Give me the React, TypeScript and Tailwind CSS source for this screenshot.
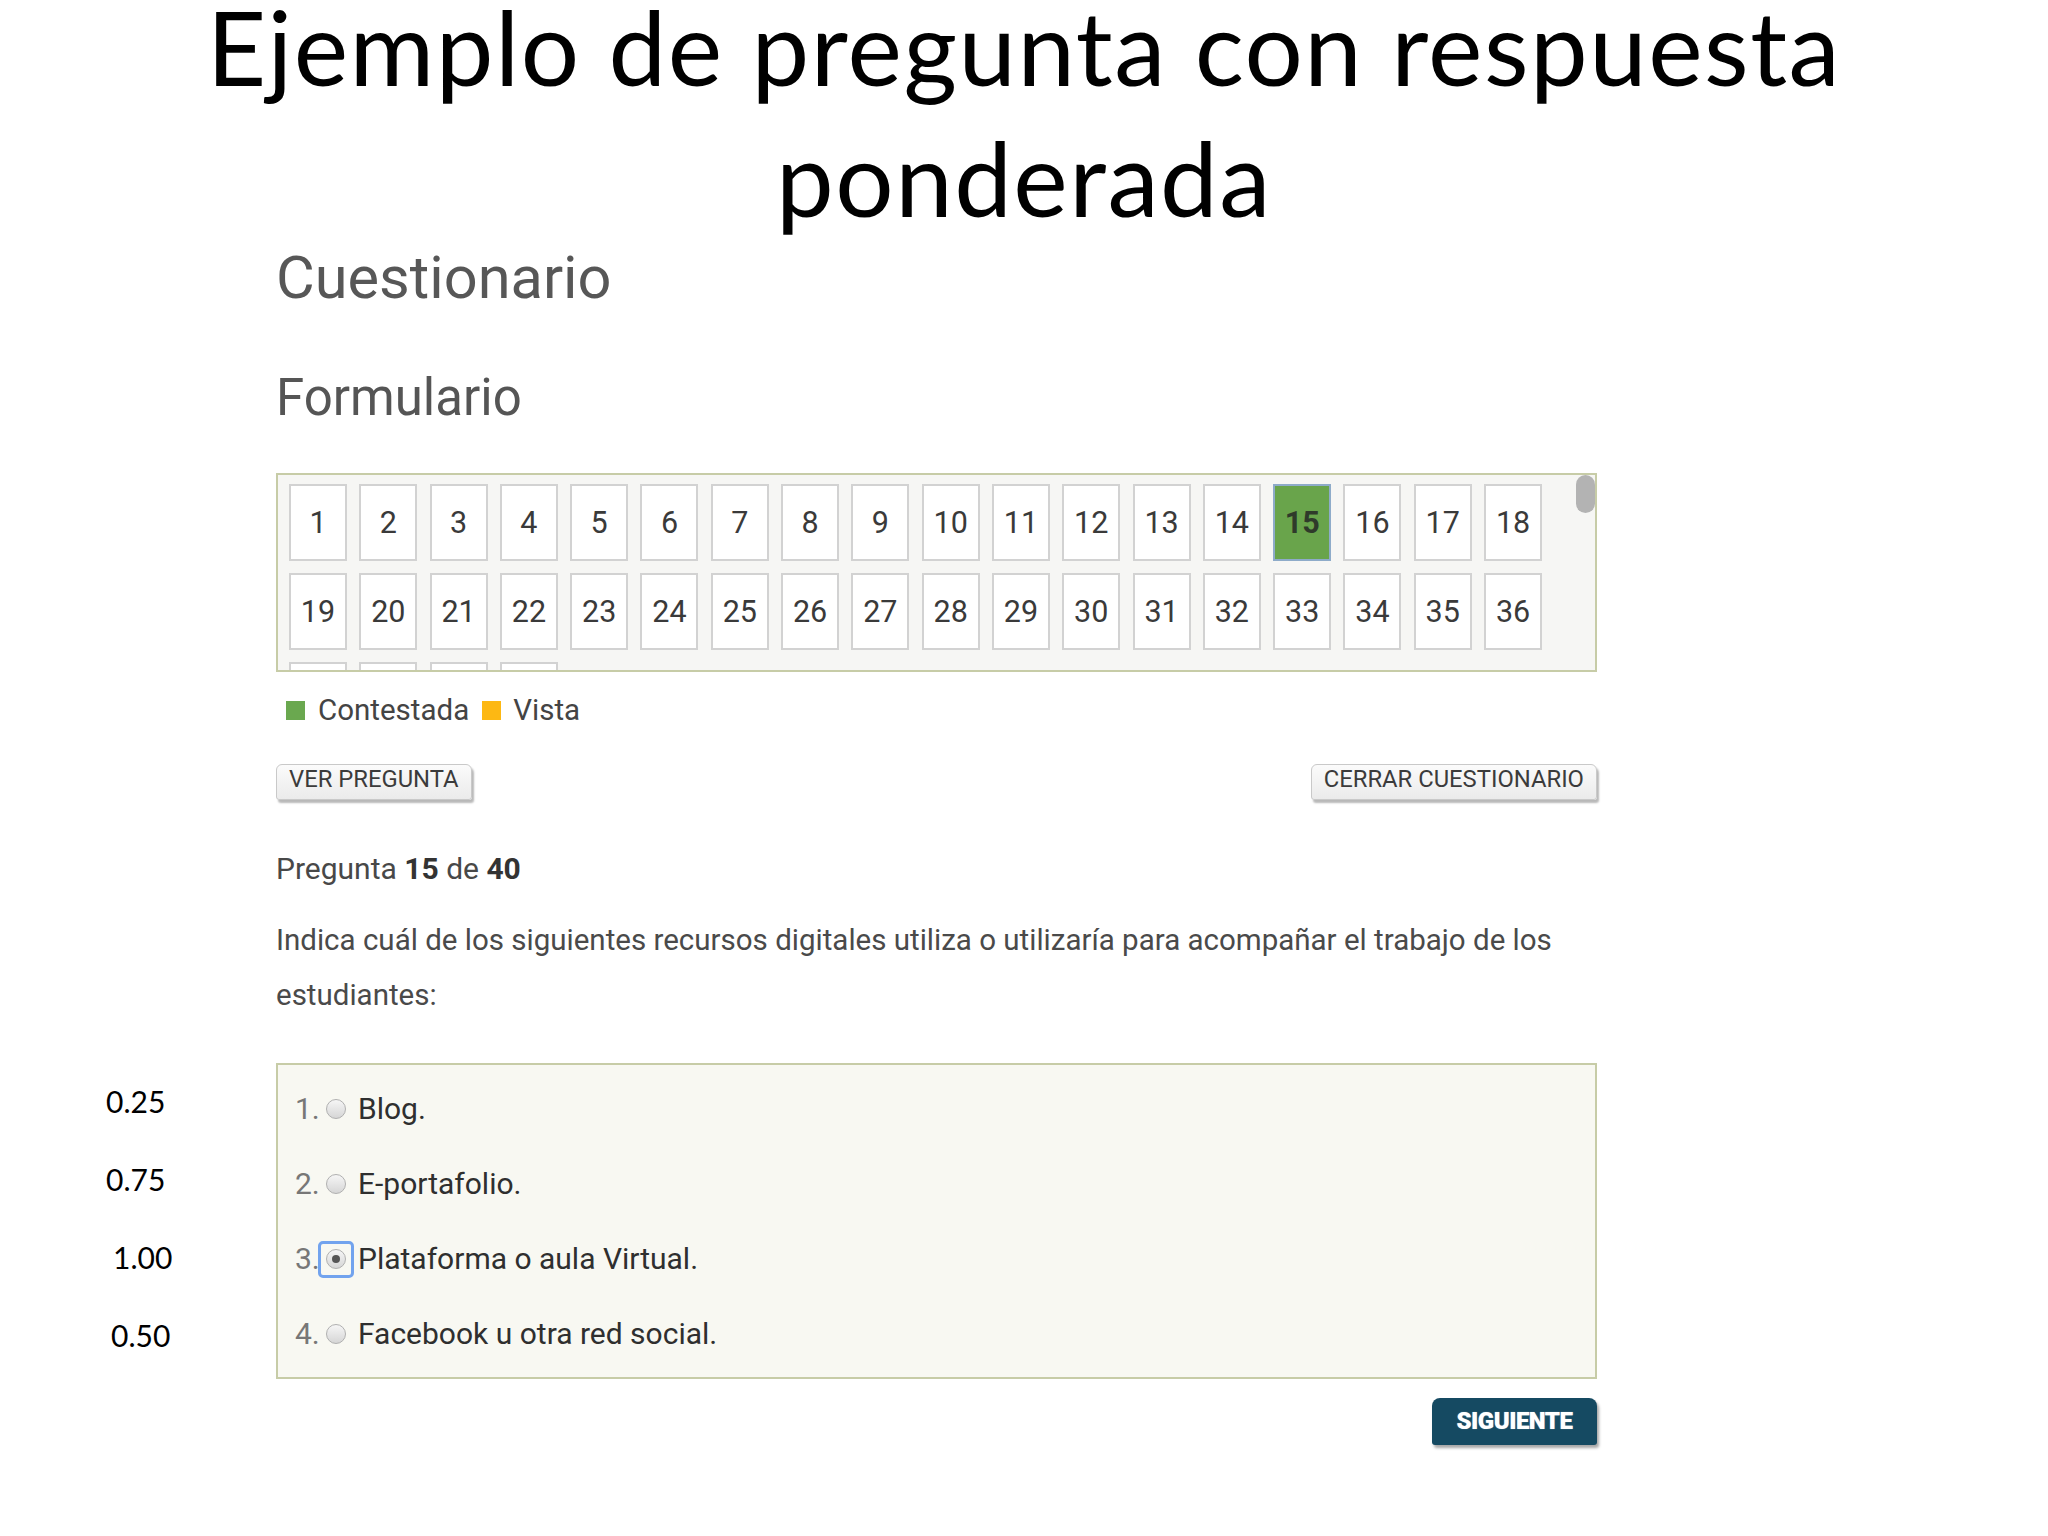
import React from "react";

const WEB_FONT = "font-['Roboto','Liberation_Sans',sans-serif]";
const SLIDE_FONT = "font-['Lato','Liberation_Sans',sans-serif]";

// third row sits under the scroll edge, only the cell tops show
const rows = [
  Array.from({ length: 18 }, (_, i) => i + 1),
  Array.from({ length: 18 }, (_, i) => i + 19),
  Array.from({ length: 4 }, (_, i) => i + 37),
];

const options = [
  { n: "1.", label: "Blog.", score: "0.25", scoreClass: "ml-[106px]", selected: false },
  { n: "2.", label: "E-portafolio.", score: "0.75", scoreClass: "ml-[106px]", selected: false },
  { n: "3.", label: "Plataforma o aula Virtual.", score: "1.00", scoreClass: "ml-[113px]", selected: true },
  { n: "4.", label: "Facebook u otra red social.", score: "0.50", scoreClass: "ml-[111px]", selected: false },
];

const greyButtonClass =
  "flex h-[36px] items-center rounded-t-[6px] rounded-b-[3px] border border-[#c9c9c9] bg-gradient-to-b from-[#fbfbfb] to-[#ebebeb] px-[12px] pb-[4px] text-[23.8px] text-[#3b3b3b] shadow-[2px_3px_2px_rgba(0,0,0,0.28)]";

function NavCell({ n, hidden }: { n: number; hidden?: boolean }) {
  const current = n === 15;
  return (
    <div
      className={
        current
          ? "flex h-[77px] w-[58px] items-center justify-center border-2 border-[#8eabc9] bg-[#69a44b] text-[30.5px] font-bold text-[#2f3a2a]"
          : "flex h-[77px] w-[58px] items-center justify-center border-2 border-[#d2d2d2] bg-white text-[30.5px] text-[#3a3a3a]"
      }
    >
      {hidden ? null : n}
    </div>
  );
}

function Radio({ selected }: { selected: boolean }) {
  return (
    <span className="relative flex h-[20px] w-[20px] shrink-0 items-center justify-center">
      <span className="flex h-[20px] w-[20px] items-center justify-center rounded-full border border-[#b0b0b0] bg-gradient-to-b from-[#f6f6f6] to-[#d6d6d6]">
        {selected && <span className="h-[8px] w-[8px] rounded-full bg-[#555]" />}
      </span>
      {selected && (
        <span className="absolute -left-[8px] -top-[8px] h-[37px] w-[36px] rounded-[5px] border-[3px] border-[#72a3ee]" />
      )}
    </span>
  );
}

export default function App() {
  return (
    <div className="h-[1536px] w-[2048px] overflow-hidden bg-white">
      <h1 className={`${SLIDE_FONT} text-center text-[103px] tracking-[1.5px] text-black`}>
        <div className="leading-[92px]">Ejemplo de pregunta con respuesta</div>
        <div className="mt-[34px] leading-[103px]">ponderada</div>
      </h1>

      <div className={`${WEB_FONT} ml-[276px] w-[1321px]`}>
        <h2 className="mt-[19px] text-[59.5px] leading-[60px] text-[#575757]">Cuestionario</h2>
        <h3 className="mt-[64px] text-[51px] leading-[51px] text-[#555]">Formulario</h3>

        <div className="relative mt-[50px] h-[199px] overflow-hidden border-2 border-[#c7cca7] bg-[#f6f6f4] pl-[11px] pt-[9px]">
          <div className="flex flex-col gap-y-[12px]">
            {rows.map((row, idx) => (
              <div key={idx} className="flex gap-x-[12.3px]">
                {row.map((n) => (
                  <NavCell key={n} n={n} hidden={idx === 2} />
                ))}
              </div>
            ))}
          </div>
          <div className="absolute right-0 top-0 h-[38px] w-[19px] rounded-full bg-[#b3b3b3]" />
        </div>

        <div className="mt-[20px] flex h-[36px] items-center text-[29.5px] leading-[36px] text-[#444]">
          <span className="ml-[10px] h-[19px] w-[19px] shrink-0 bg-[#6aa84f]" />
          <span className="ml-[13px]">Contestada</span>
          <span className="ml-[13px] h-[19px] w-[19px] shrink-0 bg-[#fdb813]" />
          <span className="ml-[12px]">Vista</span>
        </div>

        <div className="mt-[36px] flex justify-between">
          <button type="button" className={greyButtonClass}>
            VER PREGUNTA
          </button>
          <button type="button" className={greyButtonClass}>
            CERRAR CUESTIONARIO
          </button>
        </div>

        <p className="mt-[53px] text-[30px] leading-[32px] text-[#484848]">
          Pregunta <b className="text-[#333]">15</b> de <b className="text-[#333]">40</b>
        </p>

        <p className="mt-[28px] whitespace-nowrap text-[29.5px] leading-[55px] text-[#4a4a4a]">
          Indica cuál de los siguientes recursos digitales utiliza o utilizaría para acompañar el trabajo de los
          <br />
          estudiantes:
        </p>
      </div>

      <div className="mt-[39.5px] flex">
        <div className={`${SLIDE_FONT} flex w-[276px] flex-col gap-y-[38.3px] pt-[18px] text-[30px] leading-[40px] text-black`}>
          {options.map((o) => (
            <div key={o.score} className={o.scoreClass}>
              {o.score}
            </div>
          ))}
        </div>

        <div className={`${WEB_FONT} w-[1321px]`}>
          <div className="flex h-[316px] flex-col gap-y-[35px] border-2 border-[#c7cca7] bg-[#f8f8f2] pl-[17px] pt-[24px]">
            {options.map((o) => (
              <div key={o.n} className="flex h-[40px] items-center text-[30px] leading-[40px]">
                <span className="w-[31px] text-[#777]">{o.n}</span>
                <Radio selected={o.selected} />
                <span className="ml-[12px] text-[#2f2f2f]">{o.label}</span>
              </div>
            ))}
          </div>

          <div className="mt-[19px] flex justify-end">
            <button
              type="button"
              className="flex h-[47px] w-[165px] items-center justify-center rounded-t-[8px] rounded-b-[3px] bg-[#154a62] text-[24px] font-black tracking-[-0.5px] text-white shadow-[2px_3px_3px_rgba(0,0,0,0.35)] [text-shadow:0_0_1px_rgba(255,255,255,0.6)]"
            >
              SIGUIENTE
            </button>
          </div>
        </div>
      </div>
    </div>
  );
}
